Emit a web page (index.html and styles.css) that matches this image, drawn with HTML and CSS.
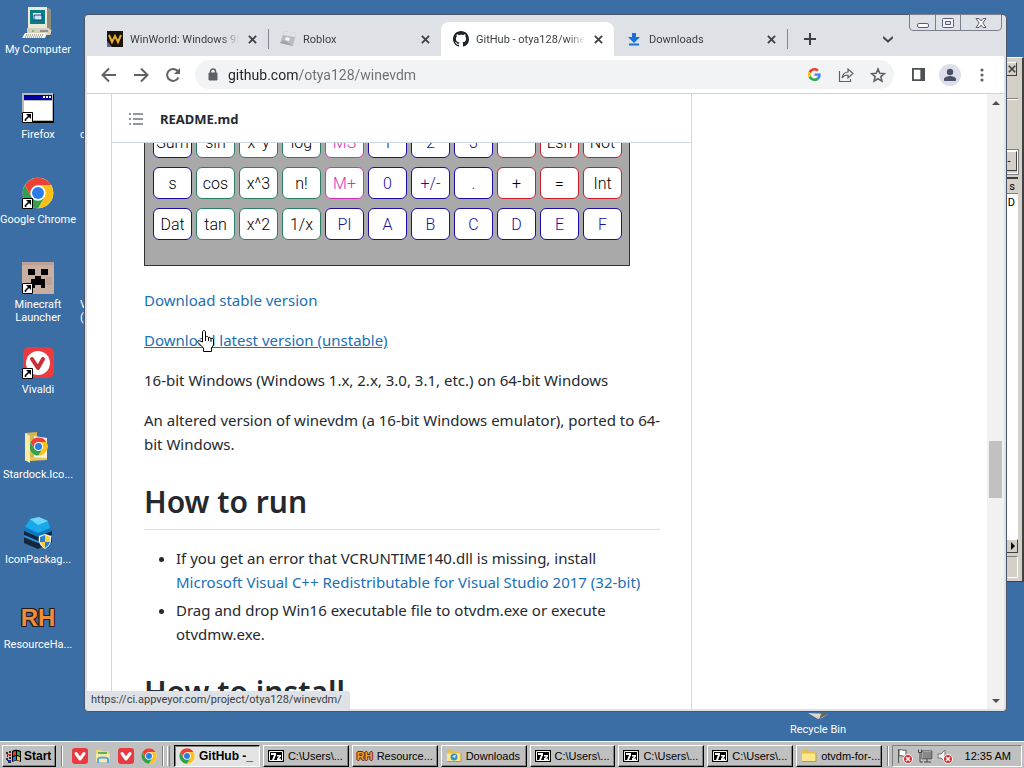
FILE: index.html
```html
<!DOCTYPE html>
<html lang="en">
<head>
  <meta charset="UTF-8">
  <title>GitHub - otya128/winevdm</title>
  <link rel="stylesheet" href="styles.css">
</head>
<body>

  <!-- Shared icons -->
  <svg class="defs" width="0" height="0" aria-hidden="true">
    <symbol id="chrome" viewBox="0 0 48 48">
      <circle cx="24" cy="24" r="23" fill="#fff"/>
      <path d="M24 24 4.1 12.5A23 23 0 0 1 43.9 12.5H24z" fill="#ea4335"/>
      <path d="M43.9 12.5A23 23 0 0 1 24 47L34 29.7 24 12.5z" fill="#fbc116"/>
      <path d="M4.1 12.5A23 23 0 0 0 24 47L34 29.7 24 24 14 29.7z" fill="#34a047"/>
      <path d="M4.1 12.5 14 29.7 24 12.5z" fill="#ea4335"/>
      <circle cx="24" cy="24" r="11.5" fill="#fff"/>
      <circle cx="24" cy="24" r="9" fill="#2b7de9"/>
    </symbol>
    <symbol id="vivaldi" viewBox="0 0 16 16">
      <rect width="16" height="16" rx="3" fill="#e83a40"/>
      <path d="M4 5.500 8 11l4-5.500" fill="none" stroke="#fff" stroke-width="3" stroke-linecap="round" stroke-linejoin="round"/>
    </symbol>
    <symbol id="shortcut" viewBox="0 0 11 11">
      <path d="M.5.5h10v10H.5z" fill="#fff" stroke="#000"/>
      <path d="M3.5 9V7.5L7 4" fill="none" stroke="#000" stroke-width="1.6"/>
      <path d="M4 2h5v5z"/>
    </symbol>
    <symbol id="sevenzip" viewBox="0 0 16 16">
      <path d="M0 2h16v12H0z"/>
      <path d="M1.500 3.500h13v9h-13z" fill="none" stroke="#fff"/>
      <path d="M3 5h5v2l-2 5H4l2-5H3zM9 7h4v1.500L11 10.500h2V12H9v-1.500l2-2H9z" fill="#fff"/>
    </symbol>
    <symbol id="folder" viewBox="0 0 16 16">
      <path d="M1 3.500 2 2h4l1.500 1.500H14V13H1z" fill="#e5bf4d"/>
      <path d="M1 5.500h14V13H1z" fill="#fbe88b"/>
      <path d="M1 13.500h14V5" fill="none" stroke="#b9973a"/>
    </symbol>
    <symbol id="close" viewBox="0 0 10 10">
      <path d="m1 1 8 8M9 1 1 9" fill="none" stroke="#3c4043" stroke-width="2"/>
    </symbol>
    <symbol id="blocked" viewBox="0 0 10 10">
      <circle cx="5" cy="5" r="4.500" fill="#d8282c" stroke="#fff"/>
      <path d="m3 3 4 4M7 3 3 7" stroke="#fff" stroke-width="1.500"/>
    </symbol>
  </svg>

  <main class="desktop">
    <div class="icon-columns">
      <div class="icon-column">
        <button class="desk-icon">
          <svg viewBox="0 0 32 32">
            <path d="M7 1h20l2 2v18l-2 2H7z" fill="#8f8b7c"/>
            <path d="M6 0h19v21H6z" fill="#ece9d8"/>
            <path d="M8 3h15v14H8z" fill="#087e82"/>
            <path d="M11 6h8v6h-8z" fill="#fff"/><path d="M12 8h8v5h-8z" fill="#c9e6ff" stroke="#123a8c"/>
            <path d="M5 21h22l3 3v4H5z" fill="#d5d1bf"/>
            <path d="M18 24h8" stroke="#555"/><path d="M10 24h2" stroke="#29a52b"/>
            <path d="M3 26h22l-2 5H0z" fill="#f6f4e8"/>
            <path d="M4 28h18M3 30h18" stroke="#77746a" stroke-dasharray="1 1"/>
            <path d="m30 24-1 4-4 3" fill="none" stroke="#4a4a43"/>
          </svg>
          <span>My Computer</span>
        </button>
        <button class="desk-icon">
          <svg viewBox="0 0 32 32">
            <path d="M1 2h31v29H1z"/><path d="M0 1h31v28H0z" fill="#b9b9b9"/>
            <path d="M2 3h28v5H2z" fill="#0000a0"/><path d="M2 9h28v19H2z" fill="#fff"/>
            <path d="M21 4h2v2h-2zM24 4h2v2h-2zM27 4h2v2h-2z" fill="#fff"/>
            <use href="#shortcut" x="0" y="20" width="11" height="11"/>
          </svg>
          <span>Firefox</span>
        </button>
        <button class="desk-icon">
          <svg viewBox="0 0 32 32"><use href="#chrome" width="32" height="32"/><use href="#shortcut" y="21" width="11" height="11"/></svg>
          <span>Google Chrome</span>
        </button>
        <button class="desk-icon">
          <svg viewBox="0 0 32 32">
            <path d="M0 0h32v32H0z" fill="#c9aea2"/><path d="M0 0h32v3H0zM4 20h5v7H4zM24 15h6v8h-6z" fill="#bda196"/>
            <path d="M6 7h7v6H6zM19 7h7v6h-7zM13 14h6v3h4v9h-4v-3h-6v3H9v-9h4z"/>
            <use href="#shortcut" y="21" width="11" height="11"/>
          </svg>
          <span>Minecraft<br>Launcher</span>
        </button>
        <button class="desk-icon">
          <svg viewBox="0 0 32 32">
            <rect x="1" width="31" height="31" rx="6" fill="#ec3a3f"/><circle cx="16" cy="16" r="12" fill="#fff"/>
            <path d="m10 12 6 9 5-9" fill="none" stroke="#c92f37" stroke-width="4" stroke-linecap="round" stroke-linejoin="round"/>
            <use href="#shortcut" y="21" width="11" height="11"/>
          </svg>
          <span>Vivaldi</span>
        </button>
        <button class="desk-icon">
          <svg viewBox="0 0 32 32">
            <path d="M3 1 15 0v27L3 29z" fill="#d9b64c"/><path d="m12 4 13 2v22H12z" fill="#f7f3e4"/>
            <use href="#chrome" x="7" y="5" width="19" height="19"/>
            <path d="m3 1 5 3v27l-5-3z" fill="#fbeaa3"/><path d="m8 25 17 1v2l-17 1z" fill="#e8c65c"/>
          </svg>
          <span>Stardock.Ico...</span>
        </button>
        <button class="desk-icon">
          <svg viewBox="0 0 32 32">
            <path d="m2 14 14-4 14 4v11l-14 7-14-6z" fill="#15263d"/>
            <path d="m2 19 14 6 14-6" fill="none" stroke="#2991d8" stroke-width="2"/>
            <path d="m3 9 13 6v5L2 14zM29 9l-13 6v5l14-6z" fill="#0e78c0"/>
            <path d="M8 2 17 0l9 4 2 7-12 5L3 10z" fill="#1ba8ea"/><path d="m8 2 9-2 9 4-10 4z" fill="#6bd5fa"/>
            <path d="m23 17 6 2c1 7-2 10-6 13-5-3-7-7-6-13z" fill="#fff"/>
            <path d="m23 18-5 2v5h5zM23 25h5c-1 3-3 5-5 6z" fill="#2d7dcc"/><path d="m23 18 5 2v5h-5zM23 25h-5c1 3 3 5 5 6z" fill="#f5d23d"/>
          </svg>
          <span>IconPackag...</span>
        </button>
        <button class="desk-icon">
          <span class="rh rh-big">RH</span>
          <span>ResourceHa...</span>
        </button>
      </div>
      <div class="icon-column second">
        <span class="peek peek-firefox">c</span>
        <span class="peek peek-minecraft">V<br>(</span>
      </div>
    </div>

    <button class="desk-icon recycle">
      <svg viewBox="0 0 32 32"><path d="m6 26 20 1-6 4-4 1z" fill="#ded8c8"/><path d="m20 25 6 2-9 5z" fill="#6b665c"/></svg>
      <span>Recycle Bin</span>
    </button>

    <!-- Window sitting behind the browser -->
    <section class="back-window">
      <div class="back-title"><button aria-label="Close window"><svg viewBox="0 0 10 10"><use href="#close"/></svg></button></div>
      <div class="back-tools"></div>
      <div class="back-combo"><button aria-label="Open list">-</button></div>
      <div class="back-head">s</div>
      <div class="back-list">D</div>
      <div class="back-scroll"><button aria-label="Scroll right"><svg viewBox="0 0 6 8"><path d="m1 0 4 4-4 4z"/></svg></button></div>
      <div class="back-status"></div>
    </section>

    <section class="browser">
      <div class="tab-strip">
        <div class="tab">
          <svg class="favicon" viewBox="0 0 16 16"><path d="M0 0h16v16H0z" fill="#17120c"/><path d="m2 4 3 7 3-6 3 6 3-7" fill="none" stroke="#e8a92d" stroke-width="2"/><path d="m0 10 5 6H0z" fill="#65658b"/></svg>
          <span class="tab-title">WinWorld: Windows 98</span>
          <button class="tab-close" aria-label="Close tab"><svg viewBox="0 0 10 10"><use href="#close"/></svg></button>
        </div>
        <div class="tab divided">
          <svg class="favicon" viewBox="0 0 16 16"><path d="m4 0 12 2-3 13L0 12z" fill="#b9bdc1"/><path d="m4 0 12 2-1 4L3 4z" fill="#dfe2e4"/><path d="m6 6 4 1-1 3-4-1z" fill="#f4f5f6"/><path d="m0 12 4-3 9 6z" fill="#9da2a7"/></svg>
          <span class="tab-title">Roblox</span>
          <button class="tab-close" aria-label="Close tab"><svg viewBox="0 0 10 10"><use href="#close"/></svg></button>
        </div>
        <div class="tab active">
          <svg class="favicon" viewBox="0 0 16 16"><path fill="#1f2328" d="M8 0C3.580 0 0 3.580 0 8c0 3.540 2.290 6.530 5.470 7.590.4.070.55-.17.55-.38 0-.19-.01-.82-.01-1.490-2.010.37-2.530-.49-2.690-.94-.09-.23-.48-.94-.82-1.130-.28-.15-.68-.52-.01-.53.63-.01 1.080.58 1.230.82.72 1.210 1.870.87 2.330.66.07-.52.28-.87.51-1.070-1.780-.2-3.640-.89-3.640-3.950 0-.87.31-1.590.82-2.150-.08-.2-.36-1.020.08-2.120 0 0 .67-.21 2.200.82.64-.18 1.320-.27 2-.27s1.360.09 2 .27c1.530-1.040 2.200-.82 2.200-.82.44 1.100.16 1.920.08 2.120.51.56.82 1.270.82 2.150 0 3.070-1.870 3.750-3.650 3.950.29.25.54.73.54 1.480 0 1.070-.01 1.930-.01 2.200 0 .21.15.46.55.38A8.010 8.010 0 0 0 16 8c0-4.420-3.580-8-8-8z"/></svg>
          <span class="tab-title">GitHub - otya128/winevdm</span>
          <button class="tab-close" aria-label="Close tab"><svg viewBox="0 0 10 10"><use href="#close"/></svg></button>
        </div>
        <div class="tab last">
          <svg class="favicon" viewBox="0 0 16 16"><path d="M6 2h4v4h4l-6 6-6-6h4zM3 12.500h10v2H3z" fill="#1a6fd8"/></svg>
          <span class="tab-title">Downloads</span>
          <button class="tab-close" aria-label="Close tab"><svg viewBox="0 0 10 10"><use href="#close"/></svg></button>
        </div>
        <button class="new-tab" aria-label="New tab"><svg viewBox="0 0 12 12"><path d="M6 0v12M0 6h12" stroke="#3c4043" stroke-width="2"/></svg></button>
        <button class="tab-search" aria-label="Search tabs"><svg viewBox="0 0 10 10"><path d="m0 3 5 4.500L10 3" fill="none" stroke="#3c4043" stroke-width="2"/></svg></button>
        <div class="caption-buttons">
          <button aria-label="Minimize"><svg viewBox="0 0 14 12"><rect x="1.500" y="6.500" width="11" height="4" rx="1.500" fill="#fff" stroke="#5b5e70"/></svg></button>
          <button aria-label="Maximize"><svg viewBox="0 0 14 12"><rect x="1.500" y="1.500" width="11" height="9" rx="1" fill="#f2f3f7" stroke="#5b5e70"/><path d="M4.500 4.500h5v3h-5z" fill="#dee1e6" stroke="#5b5e70"/></svg></button>
          <button class="wide" aria-label="Close"><svg viewBox="0 0 14 12"><path d="M2 1.500h3l2 2.500 2-2.500h3L8.800 6l3.200 4.500H9L7 8l-2 2.500H2L5.200 6z" fill="#fff" stroke="#5b5e70"/></svg></button>
        </div>
      </div>

      <div class="toolbar">
        <button aria-label="Back"><svg viewBox="0 0 16 16"><path d="M15 8H2M8 1.500 1.500 8 8 14.500" fill="none" stroke="#5f6368" stroke-width="2"/></svg></button>
        <button aria-label="Forward"><svg viewBox="0 0 16 16"><path d="M1 8h13M8 1.500 14.500 8 8 14.500" fill="none" stroke="#5f6368" stroke-width="2"/></svg></button>
        <button aria-label="Reload"><svg viewBox="0 0 16 16"><path d="M13.500 10.500A6 6 0 1 1 12.500 3.800L14 5.500" fill="none" stroke="#5f6368" stroke-width="2"/><path d="M15 1v6H9z" fill="#5f6368"/></svg></button>
        <div class="omnibox">
          <svg class="lock" viewBox="0 0 10 14"><path d="M1 5h8v7H1z" fill="#5f6368" stroke="#5f6368" stroke-linejoin="round"/><path d="M2.500 5V3.500a2.500 2.500 0 0 1 5 0V5" fill="none" stroke="#5f6368" stroke-width="1.500"/></svg>
          <input type="text" aria-label="Address" value="github.com/otya128/winevdm">
          <button aria-label="Google"><svg class="small" viewBox="0 0 48 48"><path fill="#ea4335" d="M24 9.500c3.540 0 6.710 1.220 9.210 3.600l6.850-6.850C35.900 2.380 30.470 0 24 0 14.620 0 6.510 5.380 2.560 13.220l7.980 6.190C12.430 13.720 17.740 9.500 24 9.500z"/><path fill="#4285f4" d="M46.980 24.550c0-1.570-.15-3.090-.38-4.550H24v9.020h12.940c-.58 2.960-2.260 5.480-4.780 7.180l7.730 6c4.510-4.180 7.090-10.360 7.090-17.650z"/><path fill="#fbbc05" d="M10.530 28.590A14.500 14.500 0 0 1 10.530 19.410l-7.980-6.190a24 24 0 0 0 0 21.560z"/><path fill="#34a853" d="M24 48c6.480 0 11.930-2.130 15.890-5.810l-7.730-6c-2.150 1.450-4.920 2.300-8.160 2.300-6.260 0-11.570-4.220-13.470-9.910l-7.980 6.190C6.510 42.620 14.620 48 24 48z"/></svg></button>
          <button aria-label="Share"><svg viewBox="0 0 16 16"><path d="M1.500 4v10.500h11V12M4 11c.5-4 2.500-5.500 6-6V2l5 4.500-5 4.500V8c-3 0-4.500.8-6 3z" fill="none" stroke="#5f6368" stroke-width="1.200"/></svg></button>
          <button aria-label="Bookmark"><svg viewBox="0 0 16 16"><path d="m8 2 1.800 4.200 4.600.4-3.500 3 1 4.500L8 11.700l-3.900 2.400 1-4.500-3.500-3 4.600-.4z" fill="none" stroke="#5f6368" stroke-width="1.600"/></svg></button>
        </div>
        <button aria-label="Side panel"><svg class="small" viewBox="0 0 14 14"><path d="M1 1h12v12H1z" fill="none" stroke="#4d5156" stroke-width="2"/><path d="M9 1h4v12H9z" fill="#4d5156"/></svg></button>
        <button class="profile" aria-label="Profile"><svg viewBox="0 0 16 16"><circle cx="8" cy="5" r="3.200" fill="#4a5068"/><path d="M2 14v-2c0-2 4-3 6-3s6 1 6 3v2z" fill="#4a5068"/></svg></button>
        <button aria-label="Menu"><svg viewBox="0 0 16 16"><circle cx="8" cy="3" r="1.600" fill="#5f6368"/><circle cx="8" cy="8" r="1.600" fill="#5f6368"/><circle cx="8" cy="13" r="1.600" fill="#5f6368"/></svg></button>
      </div>

      <div class="viewport">
        <article class="readme">
          <header class="readme-head">
            <button aria-label="Table of contents"><svg viewBox="0 0 16 16"><path d="M5 3h10M5 8h10M5 13h10M1 3h2M1 8h2M1 13h2" stroke="#6e7781" stroke-width="1.500"/></svg></button>
            <strong>README.md</strong>
          </header>
          <div class="readme-body">
            <div class="calc-clip">
              <div class="calc">
                <button class="key dark-blue">Sum</button><button class="key green">sin</button><button class="key green">x^y</button><button class="key green">log</button><button class="key pink">MS</button><button class="key blue">1</button><button class="key blue">2</button><button class="key blue">3</button><button class="key red" aria-label="Subtract"></button><button class="key red">Lsh</button><button class="key red">Not</button>
                <button class="key dark-blue">s</button><button class="key green">cos</button><button class="key green">x^3</button><button class="key green">n!</button><button class="key pink">M+</button><button class="key blue">0</button><button class="key blue">+/-</button><button class="key blue">.</button><button class="key red">+</button><button class="key red">=</button><button class="key red">Int</button>
                <button class="key dark-blue">Dat</button><button class="key green">tan</button><button class="key green">x^2</button><button class="key green">1/x</button><button class="key blue">PI</button><button class="key blue">A</button><button class="key blue">B</button><button class="key blue">C</button><button class="key blue">D</button><button class="key blue">E</button><button class="key blue">F</button>
              </div>
            </div>
            <p><a href="#">Download stable version</a></p>
            <p><a class="hovered" href="#">Download latest version (unstable)</a></p>
            <p>16-bit Windows (Windows 1.x, 2.x, 3.0, 3.1, etc.) on 64-bit Windows</p>
            <p>An altered version of winevdm (a 16-bit Windows emulator), ported to 64-<br>bit Windows.</p>
            <h1>How to run</h1>
            <ul>
              <li>If you get an error that VCRUNTIME140.dll is missing, install<br><a href="#">Microsoft Visual C++ Redistributable for Visual Studio 2017 (32-bit)</a></li>
              <li>Drag and drop Win16 executable file to otvdm.exe or execute<br>otvdmw.exe.</li>
            </ul>
            <h1>How to install</h1>
          </div>
        </article>
        <div class="scrollbar">
          <button aria-label="Scroll up"><svg viewBox="0 0 8 4"><path d="m0 4 4-4 4 4z" fill="#505050"/></svg></button>
          <div class="track"><div class="thumb"></div></div>
          <button aria-label="Scroll down"><svg viewBox="0 0 8 4"><path d="m0 0 4 4 4-4z" fill="#505050"/></svg></button>
        </div>
        <div class="status-bubble">https://ci.appveyor.com/project/otya128/winevdm/</div>
      </div>
    </section>

    <svg class="cursor" viewBox="0 0 17 22">
      <path d="M5.500 12V2c0-2 3-2 3 0v5c0-1 3-1 3 1 0-1 2.500-1 2.500 1 0-1 2.500-1 2.500 1v5l-2 3v3.500h-8V18L1 12.500C0 11 2 10 3 11z" fill="#fff" stroke="#000"/>
      <path d="M8.500 7v4M11.500 8v3M14 9v3" stroke="#000"/>
    </svg>
  </main>

  <footer class="taskbar">
    <button class="task start">
      <svg viewBox="0 0 16 16"><path d="M6 3c3-2 6-1 9 0v11c-3-2-6-2-9 0z"/><path d="M7 4c1-1 2-1 3-1v4L7 8z" fill="#e33b2e"/><path d="m11 3 3 1v4l-3-1z" fill="#35a852"/><path d="m7 9 3-1v4l-3 1z" fill="#3279e0"/><path d="m11 8 3 1v4l-3-1z" fill="#f4c430"/><path d="M0 5h2M3 4h2M1 8h1M3 7h2M0 11h2M3 10h2M2 14h3" stroke="#000" stroke-width="1.500"/><path d="M1 6.500h4" stroke="#c33"/><path d="M1 12.500h4" stroke="#22a"/></svg>
      Start
    </button>
    <div class="grip"></div>
    <div class="quick-launch">
      <button aria-label="Vivaldi"><svg viewBox="0 0 16 16"><use href="#vivaldi"/></svg></button>
      <button aria-label="Explorer"><svg viewBox="0 0 16 16"><path d="M1 2h5l1 1h7v9H1z" fill="#f0d878"/><path d="M3 4h9v3H3z" fill="#5eb15e"/><path d="M1 6h14l-1 8H1z" fill="#f8e9a6"/><path d="M3 15v-4c0-2 10-2 10 0v4" fill="none" stroke="#58a8de" stroke-width="2"/></svg></button>
      <button aria-label="Vivaldi"><svg viewBox="0 0 16 16"><use href="#vivaldi"/></svg></button>
      <button aria-label="Chrome"><svg viewBox="0 0 16 16"><use href="#chrome"/></svg></button>
    </div>
    <div class="grip"></div>
    <div class="grip raised"></div>
    <nav class="tasks">
      <button class="task pressed"><svg viewBox="0 0 16 16"><use href="#chrome"/></svg>GitHub -_</button>
      <button class="task"><svg viewBox="0 0 16 16"><use href="#sevenzip"/></svg>C:\Users\...</button>
      <button class="task"><span class="rh">RH</span>Resource...</button>
      <button class="task"><svg viewBox="0 0 16 16"><use href="#folder"/><circle cx="8" cy="9" r="3.500" fill="#3b8fd0"/><path d="m6 8 4-1-1 3z" fill="#d6f0dd"/></svg>Downloads</button>
      <button class="task"><svg viewBox="0 0 16 16"><use href="#sevenzip"/></svg>C:\Users\...</button>
      <button class="task"><svg viewBox="0 0 16 16"><use href="#sevenzip"/></svg>C:\Users\...</button>
      <button class="task"><svg viewBox="0 0 16 16"><use href="#sevenzip"/></svg>C:\Users\...</button>
      <button class="task"><svg viewBox="0 0 16 16"><use href="#folder"/></svg>otvdm-for-...</button>
    </nav>
    <div class="grip"></div>
    <div class="tray">
      <svg viewBox="0 0 16 16"><path d="M1.500 1v14" stroke="#555"/><path d="M2 2c3-1 4 1 7 0v6c-3 1-4-1-7 0z" fill="#fff" stroke="#555"/><use href="#blocked" x="6" y="6" width="10" height="10"/></svg>
      <svg viewBox="0 0 16 16"><path d="M5.500 3.500h10v8h-10z" fill="#888" stroke="#fff"/><path d="M5 3h10v8H5zM7 14h7M10 11v3" fill="none" stroke="#444"/><path d="M1.500 1.500v3h3v-3M3 5v9h3" fill="none" stroke="#444"/></svg>
      <svg viewBox="0 0 16 16"><path d="M1 6h3l4-4v12l-4-4H1z" fill="#eee" stroke="#777"/><use href="#blocked" x="6" y="6" width="10" height="10"/></svg>
      <time>12:35 AM</time>
    </div>
  </footer>

</body>
</html>
```
FILE: styles.css
```css
* {
  box-sizing: border-box;
}

body {
  margin: 0;
  height: 100vh;
  display: flex;
  flex-direction: column;
  overflow: hidden;
  background-color: #3a6ea5;
  font-family: Roboto, "Liberation Sans", sans-serif;
  font-size: 11px;
  color: #000;
}

button {
  margin: 0;
  padding: 0;
  border: 0;
  background: none;
  font: inherit;
  color: inherit;
}

svg {
  display: block;
  flex: none;
}

.defs {
  position: absolute;
}

/* Desktop */
.desktop {
  position: relative;
  flex: 1;
  min-height: 0;
  overflow: hidden;
}

.icon-columns {
  display: flex;
  padding-top: 7px;
}

.icon-column {
  width: 76px;
}

.desk-icon {
  display: flex;
  flex-direction: column;
  align-items: center;
  justify-content: flex-start;
  gap: 4px;
  width: 100%;
  height: 85px;
  color: #fff;
  line-height: 13px;
  white-space: nowrap;
}

.desk-icon svg {
  width: 32px;
  height: 32px;
}

.icon-column.second {
  display: grid;
  grid-template-rows: repeat(8, 85px);
  padding-left: 4px;
  color: #fff;
  line-height: 13px;
}

.peek {
  padding-top: 36px;
}

.peek-firefox {
  grid-row: 2;
}

.peek-minecraft {
  grid-row: 4;
}

.recycle {
  position: absolute;
  left: 780px;
  bottom: -31px;
  width: 76px;
}

.rh {
  font-family: "Liberation Sans", sans-serif;
  font-weight: bold;
  font-size: 11px;
  line-height: 16px;
  color: #f0a030;
  text-shadow: 1px 0 #6b2416, -1px 0 #6b2416, 0 1px #6b2416, 0 -1px #6b2416;
}

.rh-big {
  font-size: 24px;
  line-height: 32px;
  color: #f08c3c;
  text-shadow: 1px 1px #2a1a14, -1px -1px #2a1a14, 1px -1px #2a1a14, -1px 1px #2a1a14;
}

/* Window behind the browser */
.back-window {
  position: absolute;
  top: 57px;
  right: 0;
  width: 30px;
  height: 525px;
  display: flex;
  flex-direction: column;
  padding: 3px 4px 3px 0;
  background-color: #d4d0c8;
  border-top: 1px solid #fff;
  border-right: 2px solid #404040;
  border-bottom: 1px solid #404040;
  text-align: right;
}

.back-window button {
  width: 16px;
  height: 14px;
  background-color: #d4d0c8;
  border: 1px solid #fff;
  border-right-color: #404040;
  border-bottom-color: #404040;
}

.back-window button svg {
  width: 8px;
  height: 8px;
  margin-left: auto;
}

.back-title {
  height: 38px;
  padding-right: 1px;
  padding-top: 1px;
  border-bottom: 1px solid #808080;
}

.back-tools {
  height: 51px;
  border-top: 1px solid #fff;
}

.back-combo {
  height: 24px;
  border: 1px solid #fff;
  outline: 1px solid #808080;
}

.back-combo button {
  height: 20px;
}

.back-head {
  height: 17px;
  margin-top: 3px;
  padding-right: 3px;
  line-height: 15px;
  border-top: 2px solid #404040;
  border-bottom: 1px solid #808080;
}

.back-list {
  flex: 1;
  padding-top: 2px;
  padding-right: 3px;
  background-color: #fff;
}

.back-scroll {
  height: 17px;
  background-color: #d4d0c8;
}

.back-status {
  height: 22px;
  border: 1px solid #808080;
  border-right-color: #fff;
  border-bottom-color: #fff;
}

/* Browser window */
.browser {
  position: absolute;
  top: 14px;
  right: 17px;
  bottom: 29px;
  left: 84px;
  display: flex;
  flex-direction: column;
  padding: 0 2px 2px;
  background-color: #dee1e6;
  border: 1px solid #4b5567;
  border-radius: 4px;
}

.tab-strip {
  position: relative;
  display: flex;
  align-items: flex-end;
  height: 41px;
  padding-left: 8px;
}

.tab {
  display: flex;
  align-items: center;
  width: 173px;
  height: 34px;
  padding: 0 10px 0 12px;
  color: #3c4043;
}

.tab.divided,
.new-tab {
  background: linear-gradient(#80868b, #80868b) 0 50% / 1px 20px no-repeat;
}

.tab.active {
  background-color: #fff;
  border-radius: 8px 8px 0 0;
}

.favicon {
  width: 16px;
  height: 16px;
}

.tab-title {
  flex: 1;
  margin-left: 7px;
  margin-right: 7px;
  overflow: hidden;
  white-space: nowrap;
  -webkit-mask-image: linear-gradient(to right, #000 84%, transparent);
  mask-image: linear-gradient(to right, #000 84%, transparent);
}

.tab-close {
  display: grid;
  place-items: center;
  width: 12px;
  height: 16px;
}

.tab-close svg {
  width: 9px;
  height: 9px;
}

.new-tab,
.tab-search {
  display: grid;
  place-items: center;
  width: 46px;
  height: 34px;
}

.tab-search {
  margin-left: 32px;
}

.new-tab svg {
  width: 12px;
  height: 12px;
}

.tab-search svg {
  width: 10px;
  height: 10px;
}

.caption-buttons {
  position: absolute;
  top: -1px;
  right: 2px;
  display: flex;
  border: 1px solid #7b7f8c;
  border-radius: 0 0 4px 4px;
}

.caption-buttons button {
  display: grid;
  place-items: center;
  width: 25px;
  height: 15px;
}

.caption-buttons button + button {
  border-left: 1px solid #7b7f8c;
}

.caption-buttons .wide {
  width: 41px;
}

.caption-buttons svg {
  width: 14px;
  height: 12px;
}

.toolbar {
  display: flex;
  align-items: center;
  height: 38px;
  padding: 0 6px;
  background-color: #fff;
  border-bottom: 1px solid #d0d2d6;
}

.toolbar button {
  display: grid;
  place-items: center;
  width: 32px;
  height: 28px;
}

.toolbar svg {
  width: 16px;
  height: 16px;
}

.toolbar .small {
  width: 13px;
  height: 13px;
}

.omnibox {
  display: flex;
  flex: 1;
  align-items: center;
  height: 29px;
  margin: 0 8px 0 6px;
  padding-left: 13px;
  background-color: #f1f3f4;
  border-radius: 15px;
}

.omnibox .lock {
  width: 10px;
  height: 14px;
}

.omnibox input {
  flex: 1;
  min-width: 0;
  margin-left: 10px;
  padding: 0;
  border: 0;
  font: 14px Roboto, sans-serif;
  color: transparent;
  background: linear-gradient(to right, #202124 70px, #6b6f74 70px);
  -webkit-background-clip: text;
  background-clip: text;
}

.toolbar .profile svg {
  width: 22px;
  height: 22px;
  padding: 3px;
  border-radius: 50%;
  background-color: #dcdfea;
}

/* Page */
.viewport {
  position: relative;
  flex: 1;
  min-height: 0;
  display: flex;
  align-items: flex-start;
  overflow: hidden;
  background-color: #fff;
}

.readme {
  width: 581px;
  margin-left: 24px;
  border: 1px solid #d0d7de;
  border-top: 0;
  font-family: "Noto Sans", sans-serif;
  font-size: 15px;
  line-height: 24px;
  color: #24292f;
}

.readme-head {
  display: flex;
  align-items: center;
  gap: 16px;
  height: 49px;
  padding-top: 1px;
  padding-left: 16px;
  font-size: 13px;
  border-bottom: 1px solid #d0d7de;
}

.readme-head svg {
  width: 16px;
  height: 16px;
}

.readme-body {
  padding: 0 31px 32px 32px;
}

.readme-body p {
  margin: 0 0 16px;
  white-space: nowrap;
}

.readme a {
  color: #1a6fb5;
  text-decoration: none;
}

.readme a.hovered {
  text-decoration: underline;
}

.readme h1 {
  margin: 24px 0 16px;
  padding: 2px 0 7px;
  border-bottom: 1px solid #d8dee4;
  font-size: 30px;
  font-weight: 600;
  line-height: 40px;
}

.readme ul {
  margin: 0;
  padding-left: 32px;
  white-space: nowrap;
}

.readme li + li {
  margin-top: 4px;
}

.calc-clip {
  display: flex;
  align-items: flex-end;
  height: 123px;
  margin-bottom: 22px;
  overflow: hidden;
}

.calc {
  display: grid;
  grid-template-columns: repeat(11, 39px);
  grid-auto-rows: 32px;
  gap: 9px 4px;
  padding: 8px 7px 25px 8px;
  border: 1px solid #333;
  background-color: #a9a9a9;
}

.key {
  background-color: #fff;
  border: 1px solid #1c0ca0;
  border-radius: 6px;
  color: #000;
  font: 300 16px Roboto, sans-serif;
}

.key.blue {
  color: #1c0ca0;
}

.key.green {
  border-color: #2c7d68;
}

.key.pink {
  border-color: #d62fc0;
  color: #d62fc0;
}

.key.red {
  border-color: #c4202c;
}

.scrollbar {
  display: flex;
  flex-direction: column;
  align-self: stretch;
  width: 17px;
  margin-left: auto;
  background-color: #f1f1f1;
}

.scrollbar button {
  display: grid;
  place-items: center;
  height: 17px;
}

.scrollbar svg {
  width: 8px;
  height: 4px;
}

.track {
  flex: 1;
  padding: 330px 2px 0;
}

.thumb {
  height: 57px;
  background-color: #c1c1c1;
}

.status-bubble {
  position: absolute;
  left: 0;
  bottom: 0;
  height: 18px;
  padding: 0 8px 0 4px;
  background-color: #dee1e6;
  border-radius: 0 3px 0 0;
  line-height: 18px;
  color: #3c4043;
}

.cursor {
  position: absolute;
  left: 197px;
  top: 330px;
  width: 17px;
  height: 22px;
}

/* Taskbar */
.taskbar {
  display: flex;
  align-items: center;
  height: 27px;
  padding: 2px 2px 0;
  background-color: #c0c0c0;
  border-top: 1px solid #fff;
  font-family: "Liberation Sans", sans-serif;
}

.taskbar svg {
  width: 16px;
  height: 16px;
}

.task {
  display: flex;
  align-items: center;
  gap: 4px;
  height: 22px;
  padding: 0 4px;
  border: 1px solid #fff;
  border-right-color: #000;
  border-bottom-color: #000;
  box-shadow: inset -1px -1px #808080;
  white-space: nowrap;
  overflow: hidden;
}

.task.start {
  width: 54px;
  padding: 0 3px;
  gap: 2px;
  font-size: 12px;
  font-weight: bold;
}

.task.pressed {
  background-color: #e4e4e4;
  border-color: #000 #fff #fff #000;
  box-shadow: inset 1px 1px #808080;
  font-size: 12px;
  font-weight: bold;
}

.grip {
  width: 2px;
  height: 20px;
  margin: 0 3px 0 5px;
  border-left: 1px solid #808080;
  border-right: 1px solid #fff;
}

.grip.raised {
  width: 3px;
  margin: 0 4px 0 0;
  border-left-color: #fff;
  border-right-color: #808080;
}

.quick-launch {
  display: flex;
  gap: 7px;
  padding-left: 6px;
}

.tasks {
  display: flex;
  flex: 1;
  gap: 3px;
  min-width: 0;
}

.tasks .task {
  flex: 1 1 0;
  min-width: 0;
}

.tray {
  display: flex;
  align-items: center;
  gap: 4px;
  width: 130px;
  height: 22px;
  padding: 0 10px 0 4px;
  border: 1px solid #808080;
  border-right-color: #fff;
  border-bottom-color: #fff;
}

.tray time {
  margin-left: auto;
  white-space: nowrap;
}
```
